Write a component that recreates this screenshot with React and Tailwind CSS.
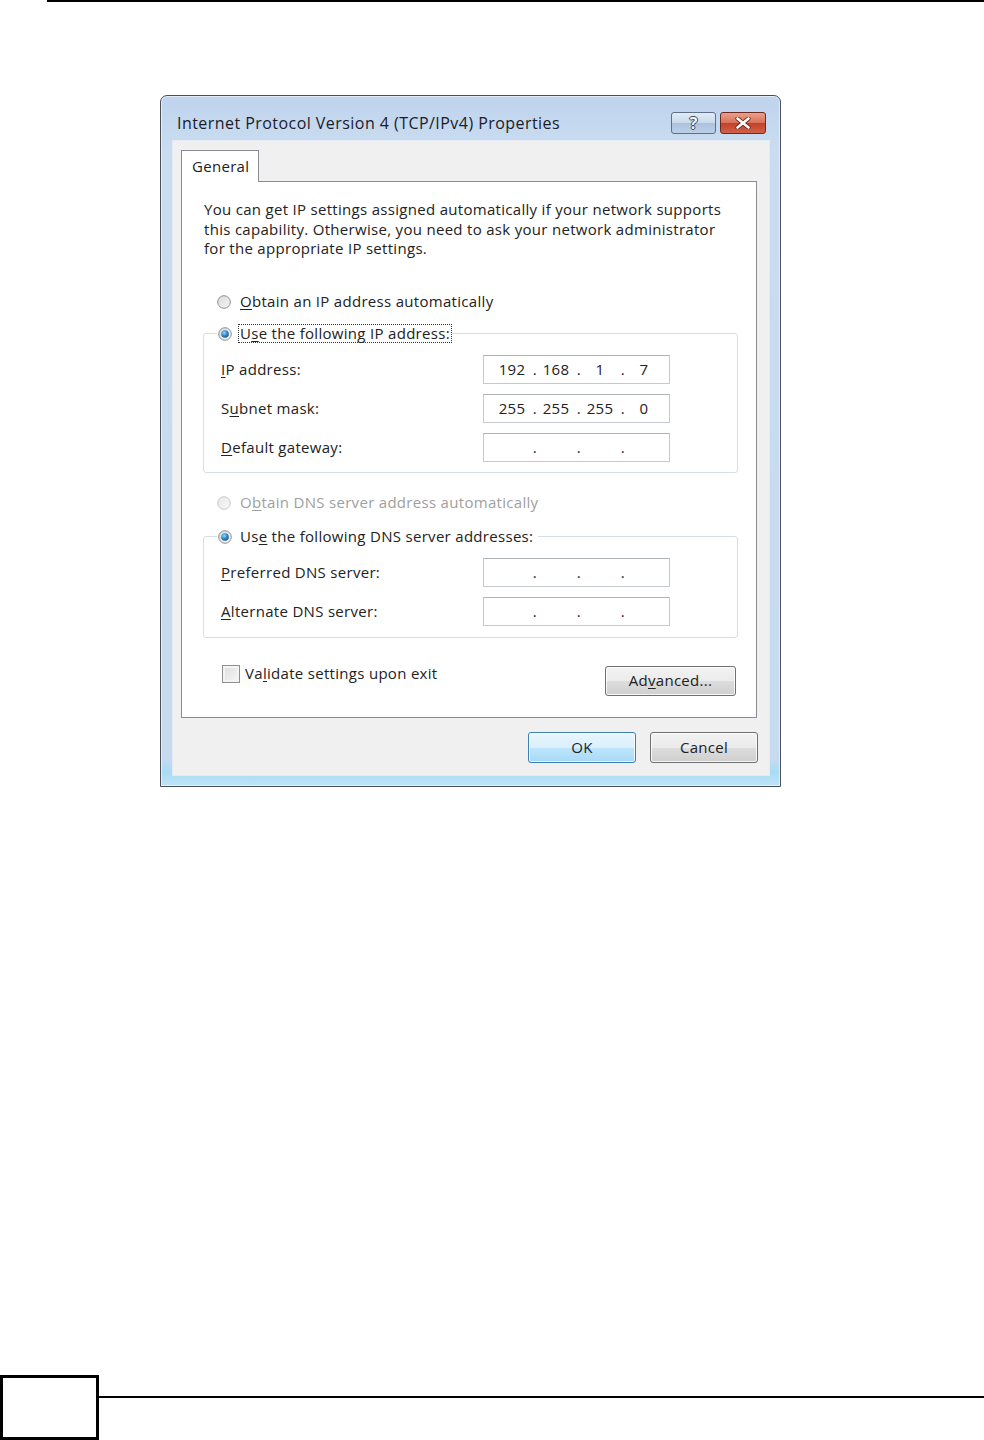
import React from "react";

const FONT = { fontFamily: '"Open Sans", "DejaVu Sans", sans-serif' };

const Radio = ({ checked, disabled }) => (
  <svg width="14" height="14" viewBox="0 0 14 14" className="shrink-0">
    <defs>
      <linearGradient id={disabled ? "rgd" : "rg"} x1="0" y1="0" x2="1" y2="1">
        <stop offset="0" stopColor={disabled ? "#e6e6e6" : "#d9d9d9"} />
        <stop offset="1" stopColor={disabled ? "#fafafa" : "#f7f7f7"} />
      </linearGradient>
      <radialGradient id="rdot" cx="0.4" cy="0.35" r="0.7">
        <stop offset="0" stopColor="#9fd8f6" />
        <stop offset="0.5" stopColor="#2f8fcf" />
        <stop offset="1" stopColor="#124f8a" />
      </radialGradient>
    </defs>
    <circle
      cx="7"
      cy="7"
      r="6.3"
      fill={`url(#${disabled ? "rgd" : "rg"})`}
      stroke={disabled ? "#c8c8c8" : "#8e8f8f"}
      strokeWidth="1"
    />
    {checked && <circle cx="7" cy="7" r="3.8" fill="url(#rdot)" />}
  </svg>
);

const U = ({ children }) => <span className="underline underline-offset-2">{children}</span>;

const IpBox = ({ parts = ["", "", "", ""] }) => (
  <div className="w-[187px] h-[29px] border border-[#c5c9d0] border-t-[#aeb2b9] bg-white flex pl-[6px] text-[#222]">
    {parts.map((p, i) => (
      <div key={i} className="w-[44px] relative flex items-center justify-center">
        {p}
        {i < 3 && (
          <span className="absolute right-[-3px] inset-y-0 flex items-center">.</span>
        )}
      </div>
    ))}
  </div>
);

const Row = ({ label, parts }) => (
  <div className="flex items-center pl-[17px]">
    <div className="w-[262px] text-[#222]">{label}</div>
    <IpBox parts={parts} />
  </div>
);

const Button = ({ children, primary, className = "" }) => (
  <div
    className={`h-[30px] rounded-[3px] border flex items-center justify-center text-[#222] shadow-[inset_0_0_0_1px_rgba(255,255,255,0.8)] ${
      primary
        ? "border-[#3c7fb1] bg-[linear-gradient(#eaf6fd_0%,#d9f0fc_50%,#bee6fd_51%,#a7d9f5_100%)]"
        : "border-[#707070] bg-[linear-gradient(#f2f2f2_0%,#ebebeb_50%,#dddddd_51%,#cfcfcf_100%)]"
    } ${className}`}
  >
    {children}
  </div>
);

export default function App() {
  return (
    <div className="bg-white min-h-[1440px] flex flex-col" style={FONT}>
      <div className="ml-[47px] h-[2px] bg-black" />

      <div className="mt-[93px] ml-[160px] w-[621px] h-[692px] border border-[#4a4f57] rounded-t-[7px] bg-[linear-gradient(#bfd4ed_0%,#c9dcf1_8%,#c6daf0_96%,#a9dcf5_98%,#bfe3f6_100%)] flex flex-col shadow-[inset_0_0_0_1px_rgba(255,255,255,0.55)]">
        {/* title bar */}
        <div className="h-[44px] shrink-0 flex items-center pt-[9px] pl-[16px] pr-[14px]">
          <div className="flex-1 text-[16px] tracking-[0.45px] text-[#1b1b2a]">
            Internet Protocol Version 4 (TCP/IPv4) Properties
          </div>
          <div className="flex gap-[4px]">
            <div className="w-[45px] h-[22px] rounded-[3px] border border-[#5f6f85] bg-[linear-gradient(#e3ecf7_0%,#c9d9eb_50%,#abc1dc_51%,#bcd0e8_100%)] flex items-center justify-center text-[#f2f5f9] font-bold text-[16px] leading-none [text-shadow:1px_0_0_#39465a,-1px_0_0_#39465a,0_1px_0_#39465a,0_-1px_0_#39465a]">
              ?
            </div>
            <div className="w-[46px] h-[22px] rounded-[3px] border border-[#6b2a1d] bg-[linear-gradient(#e9a08c_0%,#d8705a_50%,#c4402a_51%,#d0624a_100%)] flex items-center justify-center">
              <svg width="18" height="12" viewBox="0 0 18 12">
                <path
                  d="M3.5 1.5 L14.5 10.5 M14.5 1.5 L3.5 10.5"
                  stroke="#6a2416"
                  strokeWidth="4.2"
                  strokeLinecap="round"
                />
                <path
                  d="M3.5 1.5 L14.5 10.5 M14.5 1.5 L3.5 10.5"
                  stroke="#ffffff"
                  strokeWidth="2.6"
                  strokeLinecap="round"
                />
              </svg>
            </div>
          </div>
        </div>

        {/* client area */}
        <div className="ml-[11px] mr-[10px] flex-1 mb-[10px] bg-[#f0f0f0] border border-[#e4ebf4] pt-[9px] pl-[8px] pr-[11px] text-[15px] tracking-[0.3px]">
          <div className="flex">
            <div className="relative z-10 -mb-px w-[78px] h-[32px] border border-b-0 border-[#898c95] bg-white pl-[10px] pt-[4px] text-[#222]">
              General
            </div>
          </div>
          <div className="w-[576px] h-[537px] border border-[#898c95] bg-white pl-[21px] pr-[17px] pt-[18px] text-[#222]">
            <p className="leading-[19.5px] pl-[1px]">
              You can get IP settings assigned automatically if your network supports
              <br />
              this capability. Otherwise, you need to ask your network administrator
              <br />
              for the appropriate IP settings.
            </p>

            <div className="mt-[33px] h-[20px] flex items-center gap-[9px] pl-[14px]">
              <Radio />
              <span>
                <U>O</U>btain an IP address automatically
              </span>
            </div>

            <fieldset className="mt-[12px] border border-[#d5dfe5] rounded-[3px] w-[535px]">
              <legend className="ml-[13px] px-[1px] h-[20px] flex items-center gap-[7px]">
                <Radio checked />
                <span className="outline-1 outline-dotted outline-[#333] px-[1px] leading-[17px]">
                  U<U>s</U>e the following IP address:
                </span>
              </legend>
              <div className="pt-[11px] pb-[10px] flex flex-col gap-[10px]">
                <Row
                  label={
                    <>
                      <U>I</U>P address:
                    </>
                  }
                  parts={["192", "168", "1", "7"]}
                />
                <Row
                  label={
                    <>
                      S<U>u</U>bnet mask:
                    </>
                  }
                  parts={["255", "255", "255", "0"]}
                />
                <Row
                  label={
                    <>
                      <U>D</U>efault gateway:
                    </>
                  }
                />
              </div>
            </fieldset>

            <div className="mt-[20px] h-[20px] flex items-center gap-[9px] pl-[14px] text-[#a0a0a0]">
              <Radio disabled />
              <span>
                O<U>b</U>tain DNS server address automatically
              </span>
            </div>

            <fieldset className="mt-[14px] border border-[#d5dfe5] rounded-[3px] w-[535px]">
              <legend className="ml-[13px] px-[1px] h-[20px] flex items-center gap-[7px] pr-[4px]">
                <Radio checked />
                <span className="px-[1px]">
                  Us<U>e</U> the following DNS server addresses:
                </span>
              </legend>
              <div className="pt-[11px] pb-[11px] flex flex-col gap-[10px]">
                <Row
                  label={
                    <>
                      <U>P</U>referred DNS server:
                    </>
                  }
                />
                <Row
                  label={
                    <>
                      <U>A</U>lternate DNS server:
                    </>
                  }
                />
              </div>
            </fieldset>

            <div className="mt-[28px] flex items-start justify-between w-[535px]">
              <div className="flex items-center gap-[5px] pl-[19px] h-[18px] mt-[-1px]">
                <div className="w-[18px] h-[18px] border border-[#8e8f8f] bg-[linear-gradient(135deg,#dcdcdc,#f8f8f8)] shadow-[inset_0_0_0_2px_#f4f4f4]" />
                <span>
                  Va<U>l</U>idate settings upon exit
                </span>
              </div>
              <Button className="w-[131px] mr-[2px]">
                Ad<U>v</U>anced...
              </Button>
            </div>
          </div>

          <div className="mt-[14px] flex justify-end gap-[14px] w-[577px]">
            <Button primary className="w-[108px] h-[31px]">
              OK
            </Button>
            <Button className="w-[108px] h-[31px]">Cancel</Button>
          </div>
        </div>
      </div>

      <div className="mt-auto flex items-end">
        <div className="w-[99px] h-[65px] border-[3px] border-black shrink-0" />
        <div className="flex-1 h-[2px] bg-black mb-[42px]" />
      </div>
    </div>
  );
}
